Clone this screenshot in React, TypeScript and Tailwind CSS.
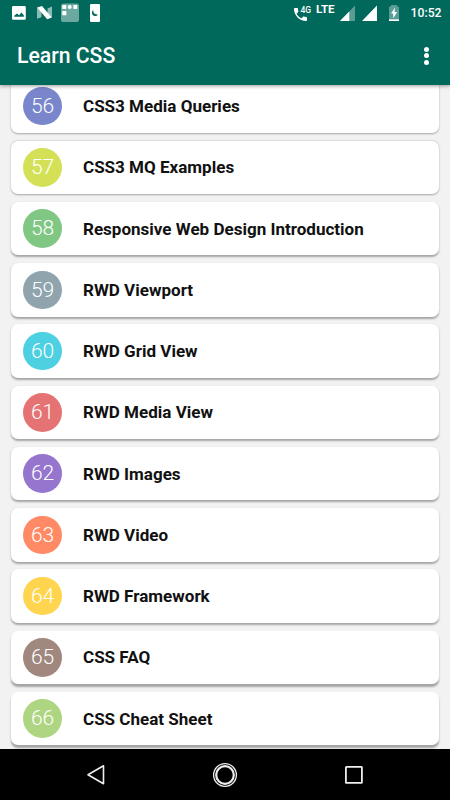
interface Lesson {
  number: number;
  title: string;
  color: string;
}

const LESSONS: Lesson[] = [
  { number: 56, title: "CSS3 Media Queries", color: "bg-[#7986cb]" },
  { number: 57, title: "CSS3 MQ Examples", color: "bg-[#d4e157]" },
  { number: 58, title: "Responsive Web Design Introduction", color: "bg-[#81c784]" },
  { number: 59, title: "RWD Viewport", color: "bg-[#90a4ae]" },
  { number: 60, title: "RWD Grid View", color: "bg-[#4dd0e1]" },
  { number: 61, title: "RWD Media View", color: "bg-[#e57373]" },
  { number: 62, title: "RWD Images", color: "bg-[#9575cd]" },
  { number: 63, title: "RWD Video", color: "bg-[#ff8a65]" },
  { number: 64, title: "RWD Framework", color: "bg-[#ffd54f]" },
  { number: 65, title: "CSS FAQ", color: "bg-[#a1887f]" },
  { number: 66, title: "CSS Cheat Sheet", color: "bg-[#aed581]" },
];

function NotificationIcons() {
  return (
    <svg width="110" height="26" viewBox="0 0 110 26" fill="#fff">
      <path fillRule="evenodd" d="M13.3 6h11.2a1.3 1.3 0 0 1 1.3 1.3v11.2a1.3 1.3 0 0 1-1.3 1.3H13.3a1.3 1.3 0 0 1-1.3-1.3V7.3A1.3 1.3 0 0 1 13.3 6Zm.9 10.8h9.6v-1.6l-2.4-2.6-2.3 2.6-2-1.8-2.9 2.4Z" />
      <path d="M37 7.4 41.5 9v8.2L37 18.8ZM47.5 8.4l4.500-1.8v11l-4.500-1.8Z" opacity=".55" />
      <path d="M37.2 7.4 42 6l9.8 11.6-4.6 1.6Z" />
      <rect x="61" y="3.6" width="18" height="18.4" rx="2.6" opacity=".42" />
      <rect x="62.3" y="5" width="4" height="3.9" rx=".6" />
      <circle cx="69.7" cy="7" r="2" />
      <rect x="73.3" y="5" width="4" height="3.9" rx=".6" />
      <rect x="62.2" y="11.1" width="4.2" height="4.2" rx=".6" />
      <rect x="90" y="4" width="10" height="18" rx="1.2" />
      <path d="M93.3 9.8c-2.3 2.2-1.5 6 1.7 6.2 1.4 0 2.2-.5 2.8-1.6-2.9.4-5-1.7-4.5-4.6Z" fill="#00695c" />
    </svg>
  );
}

function StatusBar() {
  return (
    <div className="flex h-[26px] items-start justify-between">
      <NotificationIcons />
      <div className="flex items-start pr-[8.5px]">
        <svg className="mt-[8px]" width="13" height="13" viewBox="3 3 18 18" fill="#fff">
          <path d="M6.62 10.79c1.44 2.83 3.76 5.14 6.59 6.59l2.2-2.2c.27-.27.67-.36 1.02-.24 1.12.37 2.33.57 3.57.57.55 0 1 .45 1 1V20c0 .55-.45 1-1 1-9.39 0-17-7.61-17-17 0-.55.45-1 1-1h3.5c.55 0 1 .45 1 1 0 1.25.2 2.45.57 3.57.11.35.03.74-.25 1.02l-2.2 2.2z" />
        </svg>
        <span className="-ml-[7px] mt-[4.5px] text-[8.5px] leading-[10px] font-medium">4G</span>
        <span className="ml-[5px] mt-[3px] text-[11.5px] leading-[13px] font-bold">LTE</span>
        <svg className="ml-[5px] mt-[5px]" width="38" height="17" viewBox="0 0 38 17" fill="#fff">
          <path d="M15 .5V16H0Z" opacity=".35" />
          <path d="M9.3 6.5V16H0ZM37 .5V16H22Z" />
        </svg>
        <svg className="ml-[10px] mt-[4px]" width="12" height="18" viewBox="0 0 12 18" fill="#fff">
          <path d="M3 1h6v1.5h2V15H1V2.5h2Z" opacity=".35" />
          <path d="M1 15.3h10V17H1ZM7 3.5 3 9.6h2.2v4.6L9.2 8H6.5Z" />
        </svg>
        <span className="ml-[11px] mt-[5px] text-[12.2px] leading-4 font-medium">10:52</span>
      </div>
    </div>
  );
}

function AppBar() {
  return (
    <header className="relative z-10 h-[85px] shrink-0 bg-[#00695c] text-white shadow-[0_1px_4px_rgba(0,0,0,0.4)]">
      <StatusBar />
      <div className="flex h-[59px] items-center justify-between pl-[17px] pr-[21px]">
        <h1 className="text-[21.2px] leading-6 font-medium">Learn CSS</h1>
        <button className="flex flex-col gap-[1.5px]" aria-label="More options">
          <span className="size-[5px] rounded-full bg-white" />
          <span className="size-[5px] rounded-full bg-white" />
          <span className="size-[5px] rounded-full bg-white" />
        </button>
      </div>
    </header>
  );
}

function LessonCard({ lesson, index }: { lesson: Lesson; index: number }) {
  const drop = 0.7 + index * 0.16;
  return (
    <li
      className="flex h-[53.5px] shrink-0 items-center rounded-[7px] bg-white pl-[12.3px]"
      style={{ boxShadow: `0 ${drop}px 2px rgba(0,0,0,0.32)` }}
    >
      <span className={`flex size-[38.5px] items-center justify-center rounded-full pt-px text-[21px] font-light text-white ${lesson.color}`}>
        {lesson.number}
      </span>
      <span className="ml-[21.2px] text-[17.05px] leading-5 font-bold text-[#111]">{lesson.title}</span>
    </li>
  );
}

function NavigationBar() {
  return (
    <nav className="flex h-[51px] shrink-0 items-center justify-between bg-black px-[86px]">
      <svg width="20" height="22" viewBox="0 0 20 22" fill="none" stroke="#eee" strokeWidth="1.6" strokeLinejoin="round">
        <path d="M17.5 1.8v18L2 10.8Z" />
      </svg>
      <svg width="26" height="26" viewBox="0 0 26 26" fill="none" stroke="#eee">
        <circle cx="13" cy="13" r="11.4" strokeWidth="1.3" />
        <circle cx="13" cy="13" r="8.8" strokeWidth="2.2" />
      </svg>
      <svg width="20" height="20" viewBox="0 0 20 20" fill="none" stroke="#eee" strokeWidth="1.8">
        <rect x="1.9" y="1.9" width="16" height="16" rx=".5" />
      </svg>
    </nav>
  );
}

export default function App() {
  return (
    <div className="flex h-[800px] w-[450px] flex-col overflow-hidden bg-[#f2f2f2] font-[Roboto,sans-serif]">
      <AppBar />
      <main className="min-h-0 flex-1 overflow-hidden">
        <ul className="-mt-[5.6px] flex flex-col gap-[7.75px] px-[11px]">
          {LESSONS.map((lesson, i) => <LessonCard key={lesson.number} lesson={lesson} index={i} />)}
        </ul>
      </main>
      <NavigationBar />
    </div>
  );
}
